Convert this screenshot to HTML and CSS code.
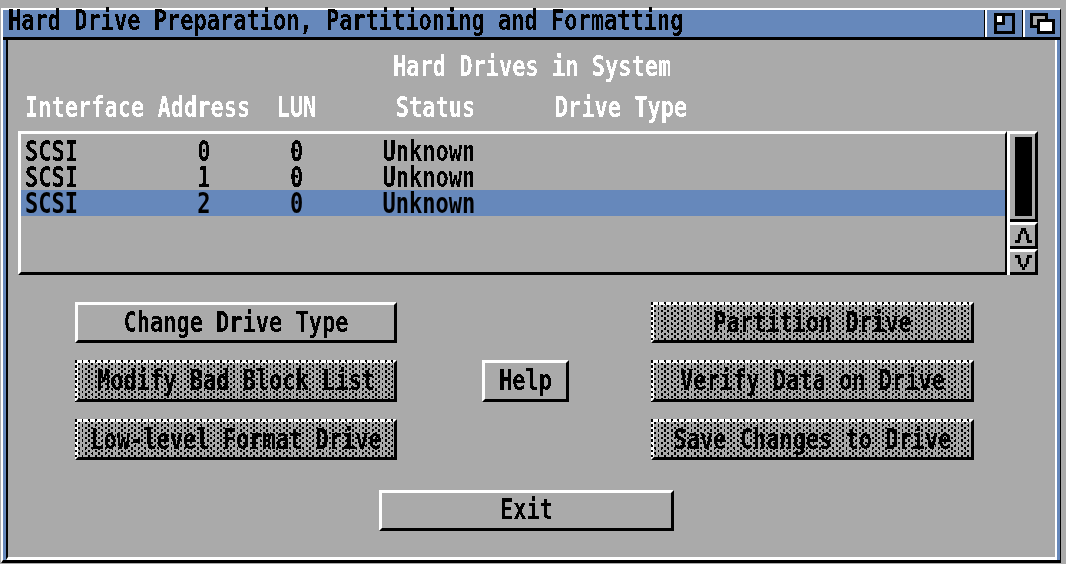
FILE: index.html
```html
<!DOCTYPE html>
<html lang="en">
<head>
    <meta charset="UTF-8">
    <title>Hard Drive Preparation, Partitioning and Formatting</title>
    <link rel="stylesheet" href="styles.css">
</head>
<body>
    <!-- hard edges on the text, like a bitmap font -->
    <svg class="defs" width="0" height="0">
        <filter id="crisp" color-interpolation-filters="sRGB">
            <feComponentTransfer>
                <feFuncA type="discrete" tableValues="0 1"></feFuncA>
            </feComponentTransfer>
        </filter>
    </svg>

    <div class="window">
        <div class="titlebar">
            <div class="text title"><span>Hard Drive Preparation, Partitioning and Formatting</span></div>
            <div class="gadget gadget-zoom">
                <svg width="21" height="21" viewBox="0 0 21 21">
                    <path d="M0 0h21v21H0z" fill="#000"/>
                    <path d="M3 3h15v15H3z" fill="#6688bb"/>
                    <path d="M3 3h8v9H3z" fill="#000"/>
                    <path d="M3 3h5v6H3z" fill="#fff"/>
                </svg>
            </div>
            <div class="gadget gadget-depth">
                <svg width="25" height="21" viewBox="0 0 25 21">
                    <path d="M0 0h18v15H0z" fill="#000"/>
                    <path d="M3 3h12v9H3z" fill="#aaa"/>
                    <path d="M7 6h18v15H7z" fill="#000"/>
                    <path d="M10 9h12v9H10z" fill="#fff"/>
                </svg>
            </div>
        </div>

        <div class="panel">
            <div class="text heading"><span>Hard Drives in System</span></div>
            <div class="text columns"><span>Interface Address  LUN      Status      Drive Type</span></div>

            <div class="listview">
                <div class="list">
                    <div class="row text"><span>SCSI         0      0      Unknown</span></div>
                    <div class="row text"><span>SCSI         1      0      Unknown</span></div>
                    <div class="row selected text"><span>SCSI         2      0      Unknown</span></div>
                </div>
                <div class="scroller">
                    <div class="scrollbar"><div class="knob"></div></div>
                    <div class="arrow">
                        <svg width="17" height="15" viewBox="0 0 17 15">
                            <path d="M6 0h5v3H6zM5 3h3v3H5zM9 3h3v3H9zM3 6h3v6H3zM11 6h3v6h-3zM0 12h5v3H0zM12 12h5v3h-5z" fill="#000"/>
                        </svg>
                    </div>
                    <div class="arrow">
                        <svg width="17" height="15" viewBox="0 0 17 15">
                            <path d="M0 0h5v3H0zM12 0h5v3h-5zM3 3h3v6H3zM11 3h3v6h-3zM5 9h3v3H5zM9 9h3v3H9zM7 12h3v3H7z" fill="#000"/>
                        </svg>
                    </div>
                </div>
            </div>

            <div class="buttons">
                <button class="btn text"><span>Change Drive Type</span></button>
                <button class="btn text ghost col-right"><span>Partition Drive</span></button>
                <button class="btn text ghost"><span>Modify Bad Block List</span></button>
                <button class="btn text help"><span>Help</span></button>
                <button class="btn text ghost"><span>Verify Data on Drive</span></button>
                <button class="btn text ghost"><span>Low-level Format Drive</span></button>
                <button class="btn text ghost col-right"><span>Save Changes to Drive</span></button>
            </div>

            <button class="btn text exit"><span>Exit</span></button>
        </div>
    </div>
</body>
</html>
```

FILE: styles.css
```css
* {
    box-sizing: border-box;
}

html, body {
    height: 100%;
}

body {
    margin: 0;
    background: #aaa;
    overflow: hidden;
    font-family: "DejaVu Sans Mono", "Liberation Mono", monospace;
    font-weight: bold;
    font-size: 22px;
    color: #000;
}

.defs {
    display: block;
}

/* text is 20px tall caps, stretched up from the 16px the font gives */
.text {
    filter: url(#crisp);
    line-height: 20px;
    white-space: pre;
}

.text span {
    display: block;
    height: 20px;
    transform: scaleY(1.25);
    transform-origin: 0 8px;
}

.window {
    width: 1060px;
    height: 555px;
    margin: 8px 0 0 1px;
    background: #6688bb;
    border-top: 2px solid #fff;
    border-left: 2px solid #fff;
    border-right: 1px solid #000;
    border-bottom: 3px solid #000;
}

.titlebar {
    display: flex;
    height: 30px;
    padding-left: 5px;
    border-bottom: 3px solid #000;
}

.title {
    flex: 1;
    padding-top: 1px;
}

.gadget {
    display: flex;
    height: 27px;
    border-left: 1px solid #000;
    box-shadow: inset 2px 0 0 #fff;
}

.gadget svg {
    display: block;
    margin-top: 3px;
}

.gadget-zoom {
    width: 38px;
    padding-left: 9px;
}

.gadget-depth {
    width: 38px;
    padding-left: 7px;
}

.panel {
    height: 520px;
    margin: 0 3px;
    padding-top: 17px;
    background: #aaa;
    border-left: 2px solid #000;
    border-right: 2px solid #fff;
    border-bottom: 3px solid #fff;
}

.heading {
    margin-left: 385px;
    color: #fff;
}

.columns {
    margin: 21px 0 13px 17px;
    color: #fff;
}

.listview {
    display: flex;
    width: 1020px;
    height: 144px;
    margin-left: 10px;
}

.list {
    flex: 1;
    padding-top: 4px;
    border-top: 3px solid #fff;
    border-left: 3px solid #fff;
    border-bottom: 3px solid #000;
    border-right: 2px solid #000;
}

.row {
    height: 26px;
    padding: 4px 0 0 4px;
}

.selected {
    background: #6688bb;
}

.scroller {
    display: flex;
    flex-direction: column;
    width: 31px;
    border-left: 3px solid #fff;
}

.scrollbar {
    height: 91px;
    padding: 3px 3px 3px 5px;
    border-top: 3px solid #fff;
    border-right: 3px solid #000;
    border-bottom: 3px solid #000;
}

.knob {
    height: 100%;
    background: #000;
}

.arrow {
    height: 27px;
    padding: 3px 0 0 5px;
    border-top: 3px solid #fff;
    border-right: 3px solid #000;
    border-bottom: 3px solid #000;
}

.arrow svg {
    display: block;
}

.arrow + .arrow {
    height: 26px;
}

.buttons {
    display: grid;
    grid-template-columns: 322px 90px 323px;
    grid-template-rows: 41px 42px 41px;
    column-gap: 82px;
    row-gap: 17px;
    margin: 27px 0 0 67px;
}

.col-right {
    grid-column: 3;
}

.btn {
    position: relative;
    display: flex;
    align-items: center;
    justify-content: center;
    margin: 0;
    padding: 0;
    background: #aaa;
    font: inherit;
    line-height: 20px;
    color: #000;
    border-top: 3px solid #fff;
    border-left: 3px solid #fff;
    border-right: 3px solid #000;
    border-bottom: 3px solid #000;
    border-radius: 0;
    filter: none;
}

.btn span {
    filter: url(#crisp);
    width: max-content;
}

.help {
    margin-left: 3px;
}

/* ghosted buttons get a staggered dot screen across the whole box */
.ghost::after {
    content: "";
    position: absolute;
    inset: -3px;
    filter: url(#crisp);
    background:
        conic-gradient(at 2px 2.5px, transparent 75%, #000 0) 0 0 / 6.6px 5.1px,
        conic-gradient(at 2px 2.5px, transparent 75%, #000 0) 3.3px 2.55px / 6.6px 5.1px;
}

.exit {
    width: 295px;
    height: 41px;
    margin: 30px 0 0 371px;
    padding-bottom: 2px;
}
```
